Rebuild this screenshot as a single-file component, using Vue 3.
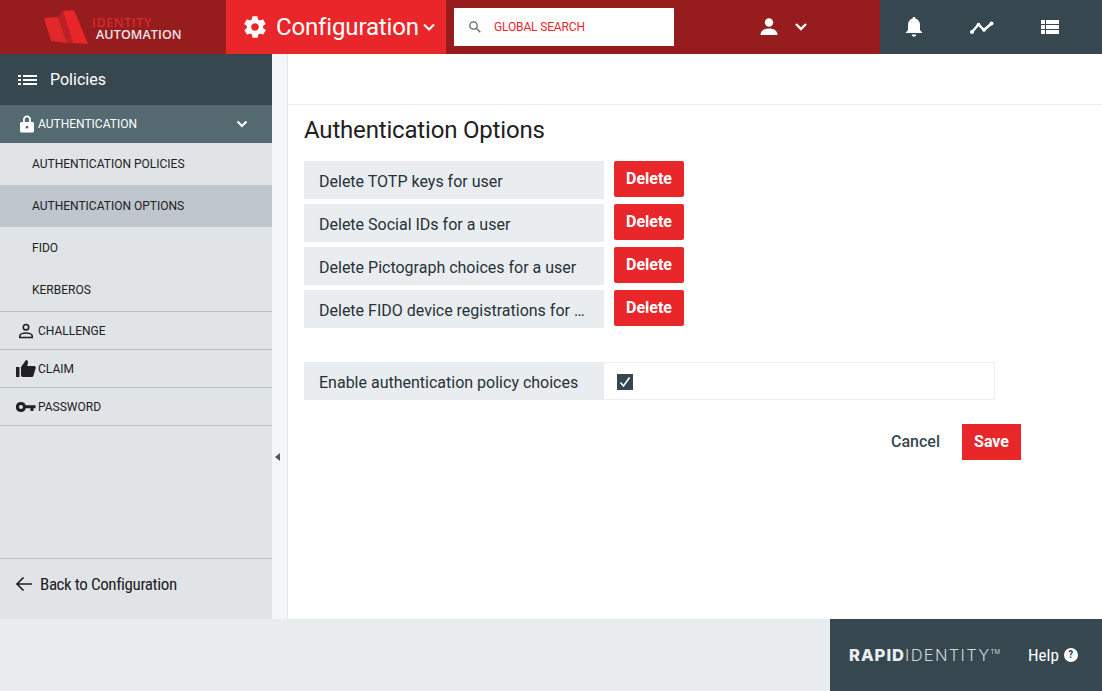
<template>
    <div class="page">
        <header class="topbar">
            <div class="logo">
                <svg class="logo-mark" width="44" height="35" viewBox="0 0 44 35">
                    <polygon points="0,8 14,7 23,33 7,31" fill="#e2282b" />
                    <polygon points="14,7 19,1 29,33 23,33" fill="#bb2024" />
                    <polygon points="19,1 30,0 44,34 29,33" fill="#e9262a" />
                </svg>
                <div class="logo-text">
                    <span class="logo-top">IDENTITY</span>
                    <span class="logo-bottom">AUTOMATION</span>
                </div>
            </div>
            <div class="module">
                <svg width="26" height="26" viewBox="0 0 24 24" fill="#fff">
                    <path d="M19.4 13c.1-.3.1-.7.1-1s0-.7-.1-1l2.1-1.6c.2-.2.2-.4.1-.6l-2-3.5c-.1-.2-.4-.3-.6-.2l-2.5 1c-.5-.4-1.100-.7-1.700-1l-.4-2.600c0-.3-.2-.5-.5-.5h-4c-.3 0-.5.2-.5.5l-.4 2.600c-.6.3-1.200.6-1.700 1l-2.500-1c-.2-.1-.5 0-.6.2l-2 3.500c-.1.2-.1.5.1.6L4.600 11c-.1.3-.1.7-.1 1s0 .7.1 1l-2.100 1.600c-.2.2-.2.4-.1.6l2 3.500c.1.2.4.3.6.2l2.500-1c.5.4 1.100.7 1.700 1l.4 2.600c0 .3.2.5.5.5h4c.3 0 .5-.2.5-.5l.4-2.600c.6-.3 1.200-.6 1.700-1l2.500 1c.2.1.5 0 .6-.2l2-3.500c.1-.2.1-.5-.1-.6L19.400 13zM12 15.500c-1.900 0-3.500-1.600-3.500-3.500s1.600-3.500 3.500-3.500 3.500 1.600 3.500 3.500-1.600 3.500-3.500 3.500z" />
                </svg>
                <span class="module-name">Configuration</span>
                <svg class="chev module-chev" width="14" height="14" viewBox="0 0 14 14"><path d="M2 4.500l5 5 5-5" /></svg>
            </div>
            <div class="top-middle">
                <div class="search">
                    <svg width="14" height="14" viewBox="0 0 14 14" fill="none" stroke="#546a70" stroke-width="1.300">
                        <circle cx="5.500" cy="5.500" r="3.700" />
                        <path d="M8.300 8.300l4 4" />
                    </svg>
                    <span>GLOBAL SEARCH</span>
                </div>
                <div class="user">
                    <svg width="20" height="20" viewBox="0 0 20 20" fill="#fff">
                        <circle cx="10" cy="5.500" r="4.200" />
                        <path d="M1.500 18c0-4.500 4-6.500 8.500-6.500s8.500 2 8.500 6.500z" />
                    </svg>
                    <svg class="chev user-chev" width="14" height="14" viewBox="0 0 14 14"><path d="M2 4l5 5 5-5" /></svg>
                </div>
            </div>
            <div class="top-actions">
                <svg width="20" height="22" viewBox="0 0 20 22" fill="#fff">
                    <path d="M10 1c1 0 1.500.7 1.500 1.600C14.500 3.400 16 6 16 9v5l2.500 3H1.500L4 14V9c0-3 1.500-5.600 4.500-6.400C8.500 1.700 9 1 10 1z" />
                    <path d="M7.800 18.500h4.400c0 1.300-1 2.200-2.200 2.200s-2.200-.9-2.200-2.200z" />
                </svg>
                <svg width="24" height="16" viewBox="0 0 24 16" fill="#fff">
                    <path d="M2 13l6.500-7.500 5.500 5.500 7.500-6.500" fill="none" stroke="#fff" stroke-width="2.400" />
                    <circle cx="2" cy="13" r="2" />
                    <circle cx="8.500" cy="5.500" r="1.800" />
                    <circle cx="14" cy="11" r="1.800" />
                    <circle cx="21.500" cy="4.500" r="2" />
                </svg>
                <svg width="20" height="16" viewBox="0 0 20 16" fill="#fff">
                    <rect x="1" y="1" width="4" height="4" />
                    <rect x="6" y="1" width="13" height="4" />
                    <rect x="1" y="6" width="4" height="4" />
                    <rect x="6" y="6" width="13" height="4" />
                    <rect x="1" y="11" width="4" height="4" />
                    <rect x="6" y="11" width="13" height="4" />
                </svg>
            </div>
        </header>

        <div class="body">
            <aside class="sidebar">
                <div class="side-title">
                    <svg width="20" height="14" viewBox="0 0 20 14" fill="#fff">
                        <rect x="0" y="2" width="3" height="2" />
                        <rect x="5" y="2" width="14" height="2" />
                        <rect x="0" y="6" width="3" height="2" />
                        <rect x="5" y="6" width="14" height="2" />
                        <rect x="0" y="10" width="3" height="2" />
                        <rect x="5" y="10" width="14" height="2" />
                    </svg>
                    <span>Policies</span>
                </div>
                <div class="group-open">
                    <svg class="group-icon" width="16" height="18" viewBox="0 0 16 18" fill="#fff">
                        <path d="M8 0.500c-2.300 0-4 1.800-4 4V7H2.500C1.600 7 1 7.600 1 8.500v7.500c0 .9.600 1.500 1.500 1.500h11c.9 0 1.500-.6 1.500-1.500V8.500C15 7.600 14.400 7 13.500 7H12V4.500c0-2.200-1.700-4-4-4zM5.800 7V4.500C5.800 3.200 6.800 2.200 8 2.200s2.200 1 2.200 2.300V7zM8 10.800a1.400 1.400 0 1 1 0 2.800 1.400 1.400 0 0 1 0-2.800z" fill-rule="evenodd" />
                    </svg>
                    <span class="group-label">AUTHENTICATION</span>
                    <svg class="chev" width="14" height="14" viewBox="0 0 14 14"><path d="M2.500 4.500L7 9l4.500-4.500" /></svg>
                </div>
                <div class="sub-items">
                    <div v-for="item in subItems" :key="item" class="sub-item" :class="{ active: item === 'AUTHENTICATION OPTIONS' }">{{ item }}</div>
                </div>
                <div class="group">
                    <svg class="group-icon challenge-icon" width="16" height="16" viewBox="0 0 16 16" fill="none" stroke="#212121" stroke-width="1.600">
                        <circle cx="8" cy="4.200" r="2.700" />
                        <path d="M1.800 14.500v-1.500c0-2 3.500-3 6.200-3s6.200 1 6.200 3v1.500z" />
                    </svg>
                    <span class="group-label">CHALLENGE</span>
                </div>
                <div class="group">
                    <svg class="group-icon wide" width="20" height="18" viewBox="0 0 20 18" fill="#212121">
                        <rect x="0" y="7" width="3.500" height="10" />
                        <path d="M5 7l5-7c1.500 0 2 1 2 2l-.7 4h7c1 0 1.700 1 1.400 2l-2.200 7.500c-.3 1-1 1.500-2 1.500H7c-1.200 0-2-.8-2-2z" />
                    </svg>
                    <span class="group-label">CLAIM</span>
                </div>
                <div class="group">
                    <svg class="group-icon wide" width="20" height="12" viewBox="0 0 20 12" fill="#212121">
                        <path d="M5 1a5 5 0 0 1 4.700 3.300H19.500V7.300h-2V10h-3V7.300H9.700A5 5 0 1 1 5 1zM5 4a2 2 0 1 0 0 4 2 2 0 0 0 0-4z" fill-rule="evenodd" />
                    </svg>
                    <span class="group-label">PASSWORD</span>
                </div>
                <div class="back">
                    <svg width="18" height="16" viewBox="0 0 18 16" fill="none" stroke="#212121" stroke-width="1.700">
                        <path d="M18 8H3M9.500 1.500L3 8l6.500 6.500" />
                    </svg>
                    <span>Back to Configuration</span>
                </div>
            </aside>

            <div class="collapse-strip"><span class="collapse-arrow"></span></div>

            <main class="content">
                <div class="content-top"></div>
                <div class="content-inner">
                    <h1>Authentication Options</h1>
                    <div class="rows">
                        <div v-for="row in deleteRows" :key="row" class="delete-row">
                            <div class="row-label">{{ row }}</div>
                            <button class="btn-delete">Delete</button>
                        </div>
                    </div>
                    <div class="enable-row">
                        <div class="enable-label">Enable authentication policy choices</div>
                        <div class="enable-value">
                            <span class="checkbox">
                                <svg width="16" height="16" viewBox="0 0 16 16" fill="none" stroke="#fff" stroke-width="1.600">
                                    <path d="M3.500 8.500l3 3.500 6-8.500" />
                                </svg>
                            </span>
                        </div>
                    </div>
                    <div class="actions">
                        <button class="btn-cancel">Cancel</button>
                        <button class="btn-save">Save</button>
                    </div>
                </div>
            </main>
        </div>

        <footer class="footer">
            <div class="footer-right">
                <div class="brand"><b>RAPID</b><span>IDENTITY</span><sup>TM</sup></div>
                <div class="help">
                    <span>Help</span>
                    <span class="help-icon">?</span>
                </div>
            </div>
        </footer>
    </div>
</template>

<script setup>
const subItems = ['AUTHENTICATION POLICIES', 'AUTHENTICATION OPTIONS', 'FIDO', 'KERBEROS'];

const deleteRows = [
    'Delete TOTP keys for user',
    'Delete Social IDs for a user',
    'Delete Pictograph choices for a user',
    'Delete FIDO device registrations for a user'
];
</script>

<style>
html,
body {
    margin: 0;
    background: #fff;
}
</style>

<style scoped>
.page {
    width: 1102px;
    height: 691px;
    display: flex;
    flex-direction: column;
    overflow: hidden;
    font-family: Roboto, "Liberation Sans", sans-serif;
    color: #212121;
}

.topbar {
    height: 54px;
    flex: none;
    display: flex;
    background: #971c1e;
}

.logo {
    width: 226px;
    flex: none;
    box-sizing: border-box;
    padding: 10px 0 0 44px;
    display: flex;
    gap: 4px;
}

.logo-text {
    display: flex;
    flex-direction: column;
    padding-top: 7px;
    font-family: "Open Sans", Roboto, sans-serif;
    font-size: 12.5px;
    line-height: 12px;
    font-weight: 600;
}

.logo-top {
    color: #d62a2d;
    letter-spacing: 0.6px;
}

.logo-bottom {
    margin-left: 4px;
    color: #ece6e6;
    letter-spacing: 0.1px;
}

.module {
    width: 220px;
    flex: none;
    box-sizing: border-box;
    padding-left: 16px;
    display: flex;
    align-items: center;
    gap: 8px;
    background: #e9262a;
    color: #fff;
}

.module-name {
    font-size: 24px;
    letter-spacing: -0.15px;
}

.chev {
    fill: none;
    stroke: #fff;
    stroke-width: 2;
}

.module-chev {
    margin-left: -5px;
}

.user-chev {
    stroke-width: 2.400;
}

.top-middle {
    flex: 1;
    display: flex;
    align-items: center;
    padding-left: 8px;
}

.search {
    width: 220px;
    height: 38px;
    box-sizing: border-box;
    background: #fff;
    padding-left: 14px;
    display: flex;
    align-items: center;
    gap: 12px;
    color: #e9262a;
    font-size: 12px;
    letter-spacing: -0.15px;
}

.user {
    margin-left: 85px;
    display: flex;
    align-items: center;
    gap: 15px;
}

.top-actions {
    width: 222px;
    flex: none;
    box-sizing: border-box;
    background: #37474f;
    padding: 0 42px 0 24px;
    display: flex;
    align-items: center;
    justify-content: space-between;
}

.body {
    flex: 1;
    min-height: 0;
    display: flex;
}

.sidebar {
    width: 272px;
    flex: none;
    display: flex;
    flex-direction: column;
    background: #e0e4e7;
}

.side-title {
    height: 51px;
    flex: none;
    box-sizing: border-box;
    padding-left: 18px;
    display: flex;
    align-items: center;
    gap: 12px;
    background: #37474f;
    color: #fff;
    font-size: 16px;
}

.group-open {
    height: 38px;
    flex: none;
    box-sizing: border-box;
    padding: 0 23px 0 19px;
    display: flex;
    align-items: center;
    background: #546a70;
    color: #fff;
}

.group-open .chev {
    margin-left: auto;
}

.group-icon {
    flex: none;
    margin-right: 3px;
}

.challenge-icon {
    margin-left: -1px;
    margin-right: 4px;
}

.group-icon.wide {
    margin-left: -3px;
    margin-right: 2px;
}

.group-label {
    font-size: 12px;
}

.sub-items {
    border-bottom: 1px solid #b4bfc5;
}

.sub-item {
    height: 42px;
    box-sizing: border-box;
    padding-left: 32px;
    display: flex;
    align-items: center;
    font-size: 12px;
}

.sub-item.active {
    background: #bfc6cd;
}

.group {
    height: 38px;
    flex: none;
    box-sizing: border-box;
    padding-left: 19px;
    display: flex;
    align-items: center;
    border-bottom: 1px solid #b4bfc5;
}

.back {
    margin-top: auto;
    height: 61px;
    flex: none;
    box-sizing: border-box;
    padding: 0 0 10px 14px;
    display: flex;
    align-items: center;
    gap: 8px;
    border-top: 1px solid #b4bfc5;
    font-size: 17px;
    font-stretch: condensed;
    letter-spacing: -0.4px;
}

.collapse-strip {
    width: 16px;
    flex: none;
    box-sizing: border-box;
    display: flex;
    justify-content: flex-start;
    align-items: flex-end;
    padding: 0 0 56px 3px;
    background: #f5f6f8;
    border-right: 1px solid #e4e7ea;
}

.collapse-arrow {
    margin-bottom: 102px;
    width: 0;
    height: 0;
    border-top: 4px solid transparent;
    border-bottom: 4px solid transparent;
    border-right: 5px solid #455a64;
}

.content {
    flex: 1;
    min-width: 0;
    background: #fff;
}

.content-top {
    height: 50px;
    border-bottom: 1px solid #eceff1;
}

.content-inner {
    padding-left: 16px;
}

h1 {
    margin: 0;
    padding: 11px 0 17px;
    font-size: 24px;
    line-height: 28px;
    font-weight: 400;
    letter-spacing: -0.18px;
    color: #212121;
}

.rows {
    display: flex;
    flex-direction: column;
    gap: 5px;
}

.delete-row {
    display: flex;
    gap: 10px;
    align-items: flex-start;
}

.row-label {
    width: 300px;
    height: 38px;
    box-sizing: border-box;
    padding: 0 15px;
    background: #eaedf0;
    color: #263238;
    font-size: 16px;
    line-height: 41px;
    white-space: nowrap;
    overflow: hidden;
    text-overflow: ellipsis;
}

.btn-delete,
.btn-save {
    border: none;
    border-radius: 2px;
    background: #e9262a;
    color: #fff;
    font-family: inherit;
    font-size: 16px;
    font-weight: 700;
    padding: 0 0 2px;
}

.btn-delete {
    width: 70px;
    height: 36px;
}

.enable-row {
    margin-top: 34px;
    width: 691px;
    height: 38px;
    display: flex;
}

.enable-label {
    width: 300px;
    flex: none;
    box-sizing: border-box;
    padding-left: 15px;
    background: #eaedf0;
    color: #263238;
    font-size: 16px;
    line-height: 41px;
    white-space: nowrap;
}

.enable-value {
    flex: 1;
    box-sizing: border-box;
    padding: 1px 0 0 13px;
    display: flex;
    align-items: center;
    border: 1px solid #eceff1;
    border-left: none;
}

.checkbox {
    width: 16px;
    height: 16px;
    display: block;
    background: #37474f;
}

.actions {
    margin-top: 24px;
    width: 717px;
    display: flex;
    justify-content: flex-end;
    align-items: center;
    gap: 22px;
}

.btn-cancel {
    border: none;
    background: none;
    padding: 0 0 2px;
    font-family: inherit;
    font-size: 16px;
    font-weight: 500;
    color: #37474f;
}

.btn-save {
    width: 59px;
    height: 36px;
    border-radius: 0;
}

.footer {
    height: 72px;
    flex: none;
    display: flex;
    justify-content: flex-end;
    background: #eaedf0;
}

.footer-right {
    width: 272px;
    box-sizing: border-box;
    padding-left: 19px;
    display: flex;
    align-items: center;
    background: #37474f;
    color: #fff;
}

.brand {
    width: 179px;
    flex: none;
    font-family: Inter, "Open Sans", sans-serif;
    font-size: 16.5px;
    white-space: nowrap;
    color: #cfd5d8;
}

.brand b {
    color: #eceff1;
    font-weight: 800;
    letter-spacing: 1px;
}

.brand span {
    font-weight: 300;
    letter-spacing: 1.300px;
}

.brand sup {
    font-size: 6px;
    vertical-align: 7px;
    line-height: 0;
}

.help {
    display: flex;
    align-items: center;
    gap: 5px;
    font-size: 17px;
    font-stretch: condensed;
}

.help-icon {
    width: 14px;
    height: 14px;
    border-radius: 50%;
    background: #fff;
    color: #37474f;
    font-size: 11px;
    font-weight: 700;
    line-height: 14px;
    text-align: center;
}
</style>
